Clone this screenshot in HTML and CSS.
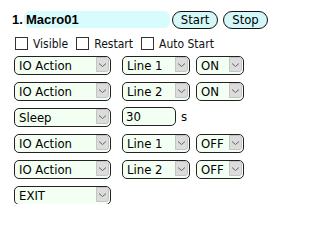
FILE: index.html
```html
<!DOCTYPE html>
<html>
<head>
<meta charset="utf-8">
<link rel="stylesheet" href="styles.css">
</head>
<body>
<div class="macro">
  <div class="head">
    <span class="num">1.</span>
    <input class="name" type="text" value="Macro01">
    <button class="btn start">Start</button>
    <button class="btn stop">Stop</button>
  </div>
  <div class="opts">
    <label class="opt"><input type="checkbox" class="cb">Visible</label>
    <label class="opt"><input type="checkbox" class="cb">Restart</label>
    <label class="opt"><input type="checkbox" class="cb">Auto Start</label>
  </div>
  <div class="steps">
    <div class="step">
      <div class="sel w1"><select><option>IO Action</option></select><span class="arrow"><svg width="9" height="6" viewBox="0 0 9 6"><path d="M1 1.5 L4.5 4.5 L8 1.5" fill="none" stroke="#666" stroke-width="1"/></svg></span></div>
      <div class="sel w2"><select><option>Line 1</option></select><span class="arrow"><svg width="9" height="6" viewBox="0 0 9 6"><path d="M1 1.5 L4.5 4.5 L8 1.5" fill="none" stroke="#666" stroke-width="1"/></svg></span></div>
      <div class="sel w3"><select><option>ON</option></select><span class="arrow"><svg width="9" height="6" viewBox="0 0 9 6"><path d="M1 1.5 L4.5 4.5 L8 1.5" fill="none" stroke="#666" stroke-width="1"/></svg></span></div>
    </div>
    <div class="step">
      <div class="sel w1"><select><option>IO Action</option></select><span class="arrow"><svg width="9" height="6" viewBox="0 0 9 6"><path d="M1 1.5 L4.5 4.5 L8 1.5" fill="none" stroke="#666" stroke-width="1"/></svg></span></div>
      <div class="sel w2"><select><option>Line 2</option></select><span class="arrow"><svg width="9" height="6" viewBox="0 0 9 6"><path d="M1 1.5 L4.5 4.5 L8 1.5" fill="none" stroke="#666" stroke-width="1"/></svg></span></div>
      <div class="sel w3"><select><option>ON</option></select><span class="arrow"><svg width="9" height="6" viewBox="0 0 9 6"><path d="M1 1.5 L4.5 4.5 L8 1.5" fill="none" stroke="#666" stroke-width="1"/></svg></span></div>
    </div>
    <div class="step">
      <div class="sel w1"><select><option>Sleep</option></select><span class="arrow"><svg width="9" height="6" viewBox="0 0 9 6"><path d="M1 1.5 L4.5 4.5 L8 1.5" fill="none" stroke="#666" stroke-width="1"/></svg></span></div>
      <input class="num-in" type="text" value="30">
      <span class="unit">s</span>
    </div>
    <div class="step">
      <div class="sel w1"><select><option>IO Action</option></select><span class="arrow"><svg width="9" height="6" viewBox="0 0 9 6"><path d="M1 1.5 L4.5 4.5 L8 1.5" fill="none" stroke="#666" stroke-width="1"/></svg></span></div>
      <div class="sel w2"><select><option>Line 1</option></select><span class="arrow"><svg width="9" height="6" viewBox="0 0 9 6"><path d="M1 1.5 L4.5 4.5 L8 1.5" fill="none" stroke="#666" stroke-width="1"/></svg></span></div>
      <div class="sel w3"><select><option>OFF</option></select><span class="arrow"><svg width="9" height="6" viewBox="0 0 9 6"><path d="M1 1.5 L4.5 4.5 L8 1.5" fill="none" stroke="#666" stroke-width="1"/></svg></span></div>
    </div>
    <div class="step">
      <div class="sel w1"><select><option>IO Action</option></select><span class="arrow"><svg width="9" height="6" viewBox="0 0 9 6"><path d="M1 1.5 L4.5 4.5 L8 1.5" fill="none" stroke="#666" stroke-width="1"/></svg></span></div>
      <div class="sel w2"><select><option>Line 2</option></select><span class="arrow"><svg width="9" height="6" viewBox="0 0 9 6"><path d="M1 1.5 L4.5 4.5 L8 1.5" fill="none" stroke="#666" stroke-width="1"/></svg></span></div>
      <div class="sel w3"><select><option>OFF</option></select><span class="arrow"><svg width="9" height="6" viewBox="0 0 9 6"><path d="M1 1.5 L4.5 4.5 L8 1.5" fill="none" stroke="#666" stroke-width="1"/></svg></span></div>
    </div>
    <div class="step">
      <div class="sel w1"><select><option>EXIT</option></select><span class="arrow"><svg width="9" height="6" viewBox="0 0 9 6"><path d="M1 1.5 L4.5 4.5 L8 1.5" fill="none" stroke="#666" stroke-width="1"/></svg></span></div>
    </div>
  </div>
</div>
</body>
</html>
```
FILE: styles.css
```css
html, body {
  margin: 0;
  padding: 0;
  background: #fff;
}
body {
  font-family: "DejaVu Sans Condensed", "DejaVu Sans", sans-serif;
  font-stretch: condensed;
  color: #000;
}
.macro {
  padding: 10px 0 0 12px;
}
.head {
  display: flex;
  align-items: center;
  height: 18px;
}
.num {
  font-family: "Liberation Sans", Arial, sans-serif;
  font-stretch: normal;
  font-weight: bold;
  font-size: 13px;
  width: 12px;
}
.name {
  box-sizing: border-box;
  width: 146px;
  height: 17px;
  border: none;
  border-radius: 6px;
  background: #d8fbfb;
  font-family: "Liberation Sans", Arial, sans-serif;
  font-stretch: normal;
  font-weight: bold;
  font-size: 13px;
  color: #000;
  padding: 0 2px;
  margin: 0;
  outline: none;
}
.btn {
  box-sizing: border-box;
  height: 18px;
  border: 1px solid #111;
  border-radius: 9px;
  background: #d4f8f8;
  font-family: "DejaVu Sans Condensed", "DejaVu Sans", sans-serif;
  font-stretch: condensed;
  font-size: 13px;
  color: #000;
  padding: 0;
  margin: 1px 0 0 0;
  line-height: 15px;
}
.start {
  margin-left: 2px;
  width: 46px;
}
.stop {
  margin-left: 5px;
  width: 45px;
}
.opts {
  display: flex;
  align-items: center;
  height: 13px;
  padding-top: 9px;
  margin-bottom: 5px;
}
.opt {
  display: flex;
  align-items: center;
  font-size: 12px;
  color: #111;
  margin-right: 5px;
}
.cb {
  appearance: none;
  -webkit-appearance: none;
  box-sizing: border-box;
  width: 13px;
  height: 13px;
  border: 1px solid #333;
  background: #fff;
  margin: 0 5px 0 3px;
  border-radius: 0;
}
.steps {
  display: flex;
  flex-direction: column;
  gap: 7px;
}
.step {
  display: flex;
  align-items: center;
  height: 19px;
}
.sel {
  position: relative;
  height: 19px;
}
.sel select {
  appearance: none;
  -webkit-appearance: none;
  box-sizing: border-box;
  width: 100%;
  height: 19px;
  border: 1px solid #222;
  border-radius: 5px;
  background: #f3fff3;
  font-family: "DejaVu Sans Condensed", "DejaVu Sans", sans-serif;
  font-stretch: condensed;
  font-size: 13px;
  color: #000;
  padding: 0 0 0 4px;
  margin: 0;
  outline: none;
}
.arrow {
  position: absolute;
  top: 2px;
  bottom: 2px;
  right: 2px;
  width: 13px;
  box-sizing: border-box;
  background: #dcdcdc;
  border: 1px solid #c4c4c4;
  border-radius: 0 3px 3px 0;
  display: flex;
  align-items: center;
  justify-content: center;
  pointer-events: none;
}
.w1 {
  width: 97px;
  margin-left: 2px;
}
.w2 {
  width: 68px;
  margin-left: 11px;
}
.w3 {
  width: 48px;
  margin-left: 6px;
}
.num-in {
  box-sizing: border-box;
  width: 54px;
  height: 19px;
  border: 1px solid #222;
  border-radius: 5px;
  background: #f3fff3;
  font-family: "DejaVu Sans Condensed", "DejaVu Sans", sans-serif;
  font-stretch: condensed;
  font-size: 13px;
  color: #000;
  padding: 0 3px;
  margin: 0 0 0 11px;
  outline: none;
}
.unit {
  font-size: 13px;
  margin-left: 5px;
}
```
